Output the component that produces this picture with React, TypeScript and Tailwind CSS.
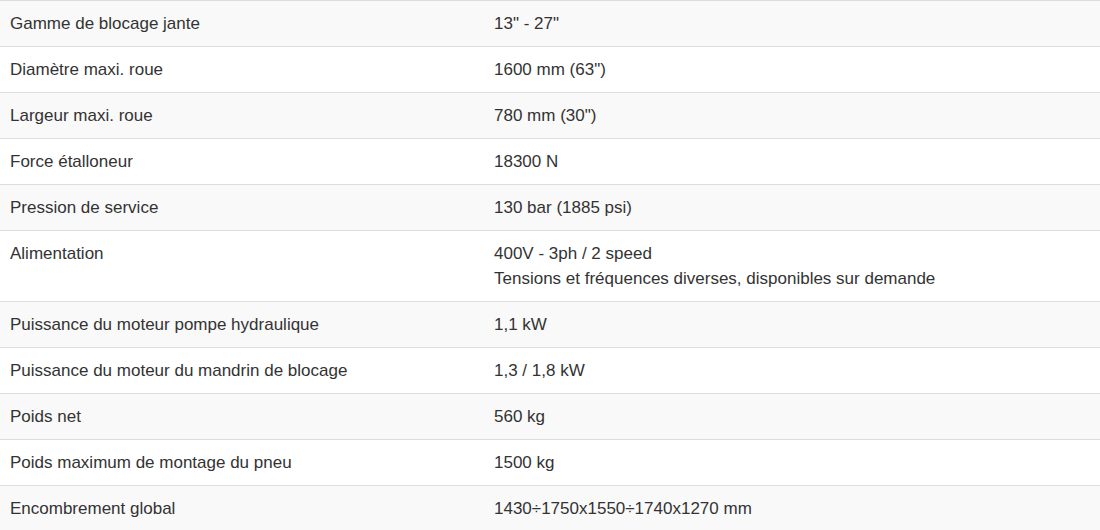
import React from "react";

const rows: [string, string[]][] = [
  ["Gamme de blocage jante", ['13" - 27"']],
  ["Diamètre maxi. roue", ['1600 mm (63")']],
  ["Largeur maxi. roue", ['780 mm (30")']],
  ["Force étalloneur", ["18300 N"]],
  ["Pression de service", ["130 bar (1885 psi)"]],
  ["Alimentation", ["400V - 3ph / 2 speed", "Tensions et fréquences diverses, disponibles sur demande"]],
  ["Puissance du moteur pompe hydraulique", ["1,1 kW"]],
  ["Puissance du moteur du mandrin de blocage", ["1,3 / 1,8 kW"]],
  ["Poids net", ["560 kg"]],
  ["Poids maximum de montage du pneu", ["1500 kg"]],
  ["Encombrement global", ["1430÷1750x1550÷1740x1270 mm"]],
];

export default function App() {
  return (
    <div className="w-[1100px] h-[530px] overflow-hidden bg-white" style={{ fontFamily: '"Liberation Sans", Arial, sans-serif' }}>
      <table className="w-full border-collapse text-[17px] leading-[25px] text-[#333]">
        <tbody>
          {rows.map(([k, v], i) => (
            <tr key={i} className={i % 2 === 0 ? "bg-[#f9f9f9]" : "bg-white"}>
              <td className="w-[484px] border-t border-[#ddd] px-[10px] py-[10px] align-top">{k}</td>
              <td className="border-t border-[#ddd] px-[10px] py-[10px] align-top">
                {v.map((line, j) => (
                  <div key={j}>{line}</div>
                ))}
              </td>
            </tr>
          ))}
        </tbody>
      </table>
    </div>
  );
}
